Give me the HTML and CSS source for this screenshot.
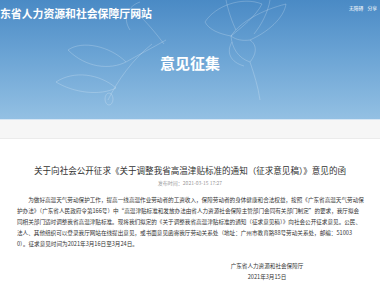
FILE: index.html
```html
<!DOCTYPE html>
<html lang="zh-CN">
<head>
<meta charset="utf-8">
<title>意见征集</title>
<link rel="stylesheet" href="styles.css">
</head>
<body>
<header class="banner">
  <svg class="deco" viewBox="0 0 380 120" aria-hidden="true">
    <g fill="none" stroke="rgba(255,255,255,0.3)" stroke-width="0.7">
      <path d="M205,22 C215,6 242,-4 262,4 C256,16 242,27 231,36 C220,34 209,30 205,22 Z"/>
      <path d="M231,36 C240,22 262,10 286,4 C284,18 268,32 250,40 C243,41 236,40 231,36 Z"/>
      <path d="M231,36 C232,48 238,58 250,62 C258,52 256,44 250,40"/>
      <path d="M250,62 C254,74 258,86 260,100"/>
      <path d="M226,0 C228,10 232,22 236,30"/>
      <path d="M270,0 C268,12 262,24 254,34"/>
      <path d="M232,42 C226,52 230,62 244,66"/>
      <path d="M68,50 C82,40 110,46 126,62 C110,70 86,68 68,50 Z"/>
      <path d="M56,82 C74,70 100,74 116,88 C100,96 74,93 56,82 Z"/>
      <path d="M108,100 C118,80 132,60 152,44"/>
      <path d="M126,62 C140,54 152,48 166,40"/>
      <path d="M140,16 C150,26 158,36 164,44"/>
      <ellipse cx="109" cy="99" rx="4" ry="6"/>
      <path d="M130,30 C122,18 128,6 140,2"/>
    </g>
  </svg>
  <div class="topbar">
    <div class="site">广东省人力资源和社会保障厅网站</div>
    <nav class="tools"><a>无障碍</a><a>分享</a></nav>
  </div>
  <h1 class="channel">意见征集</h1>
</header>
<div class="crumb"></div>
<main class="article">
  <h2 class="title">关于向社会公开征求《关于调整我省高温津贴标准的通知（征求意见稿）》意见的函</h2>
  <div class="meta">发布时间：2021-03-15 17:27</div>
  <p class="body">为做好高温天气劳动保护工作，提高一线高温作业劳动者的工资收入，保障劳动者的身体健康和合法权益，按照《广东省高温天气劳动保<br>护办法》（广东省人民政府令第166号）中“高温津贴标准和发放办法由省人力资源社会保障主管部门会同有关部门制定”的要求，我厅拟会<br>同相关部门适时调整我省高温津贴标准。现将我们拟定的《关于调整我省高温津贴标准的通知（征求意见稿）》向社会公开征求意见。公民、<br>法人、其他组织可以登录我厅网站在线提出意见，或书面意见函寄我厅劳动关系处（地址：广州市教育路88号劳动关系处，邮编：51003<br>0）。征求意见时间为2021年3月16日至3月24日。</p>
  <div class="sign">
    <p>广东省人力资源和社会保障厅</p>
    <p>2021年3月15日</p>
  </div>
</main>
</body>
</html>
```

FILE: styles.css
```css
html {
  overflow: hidden;
}

body {
  margin: 0;
  background: #ffffff;
  font-family: "Noto Sans CJK SC", "Noto Sans", sans-serif;
  color: #333333;
}

.banner {
  position: relative;
  height: 119px;
  overflow: hidden;
  background: linear-gradient(180deg, #4a8ac5 0%, #6aa3d4 45%, #93c0e3 100%);
  border-bottom: 1px solid #d6e6f4;
}

.deco {
  position: absolute;
  left: 0;
  top: 0;
  width: 380px;
  height: 120px;
}

.topbar {
  position: relative;
  display: flex;
  justify-content: space-between;
  align-items: flex-start;
}

.site {
  margin-left: -10.85px;
  padding-top: 6px;
  font-size: 10.85px;
  line-height: 14px;
  font-weight: 700;
  color: #ffffff;
  white-space: nowrap;
}

.tools {
  display: flex;
  gap: 4px;
  margin-top: 5px;
  padding-right: 3px;
  font-size: 4.8px;
  line-height: 6px;
  color: #ffffff;
}

.channel {
  position: relative;
  margin: 33px 0 0;
  text-align: center;
  font-size: 15px;
  line-height: 20px;
  font-weight: 700;
  color: #ffffff;
}

.crumb {
  height: 18px;
  background: #f6f6f6;
  border-bottom: 1px solid #ebebeb;
}

.article {
  padding: 0 17px;
}

.title {
  margin: 25px 0 0;
  text-align: center;
  font-size: 8.55px;
  line-height: 12px;
  font-weight: 400;
  color: #333333;
  white-space: nowrap;
}

.meta {
  margin-top: 3px;
  text-align: center;
  font-size: 5px;
  line-height: 8px;
  color: #999999;
}

.body {
  margin: 7.5px -10px 0 0;
  font-size: 5.6px;
  line-height: 11px;
  text-indent: 2em;
  white-space: nowrap;
  color: #333333;
}

.sign {
  width: 100px;
  margin: 11px 46px 0 auto;
  text-align: center;
  font-size: 5.6px;
  line-height: 11px;
}

.sign p {
  margin: 0;
}
```
